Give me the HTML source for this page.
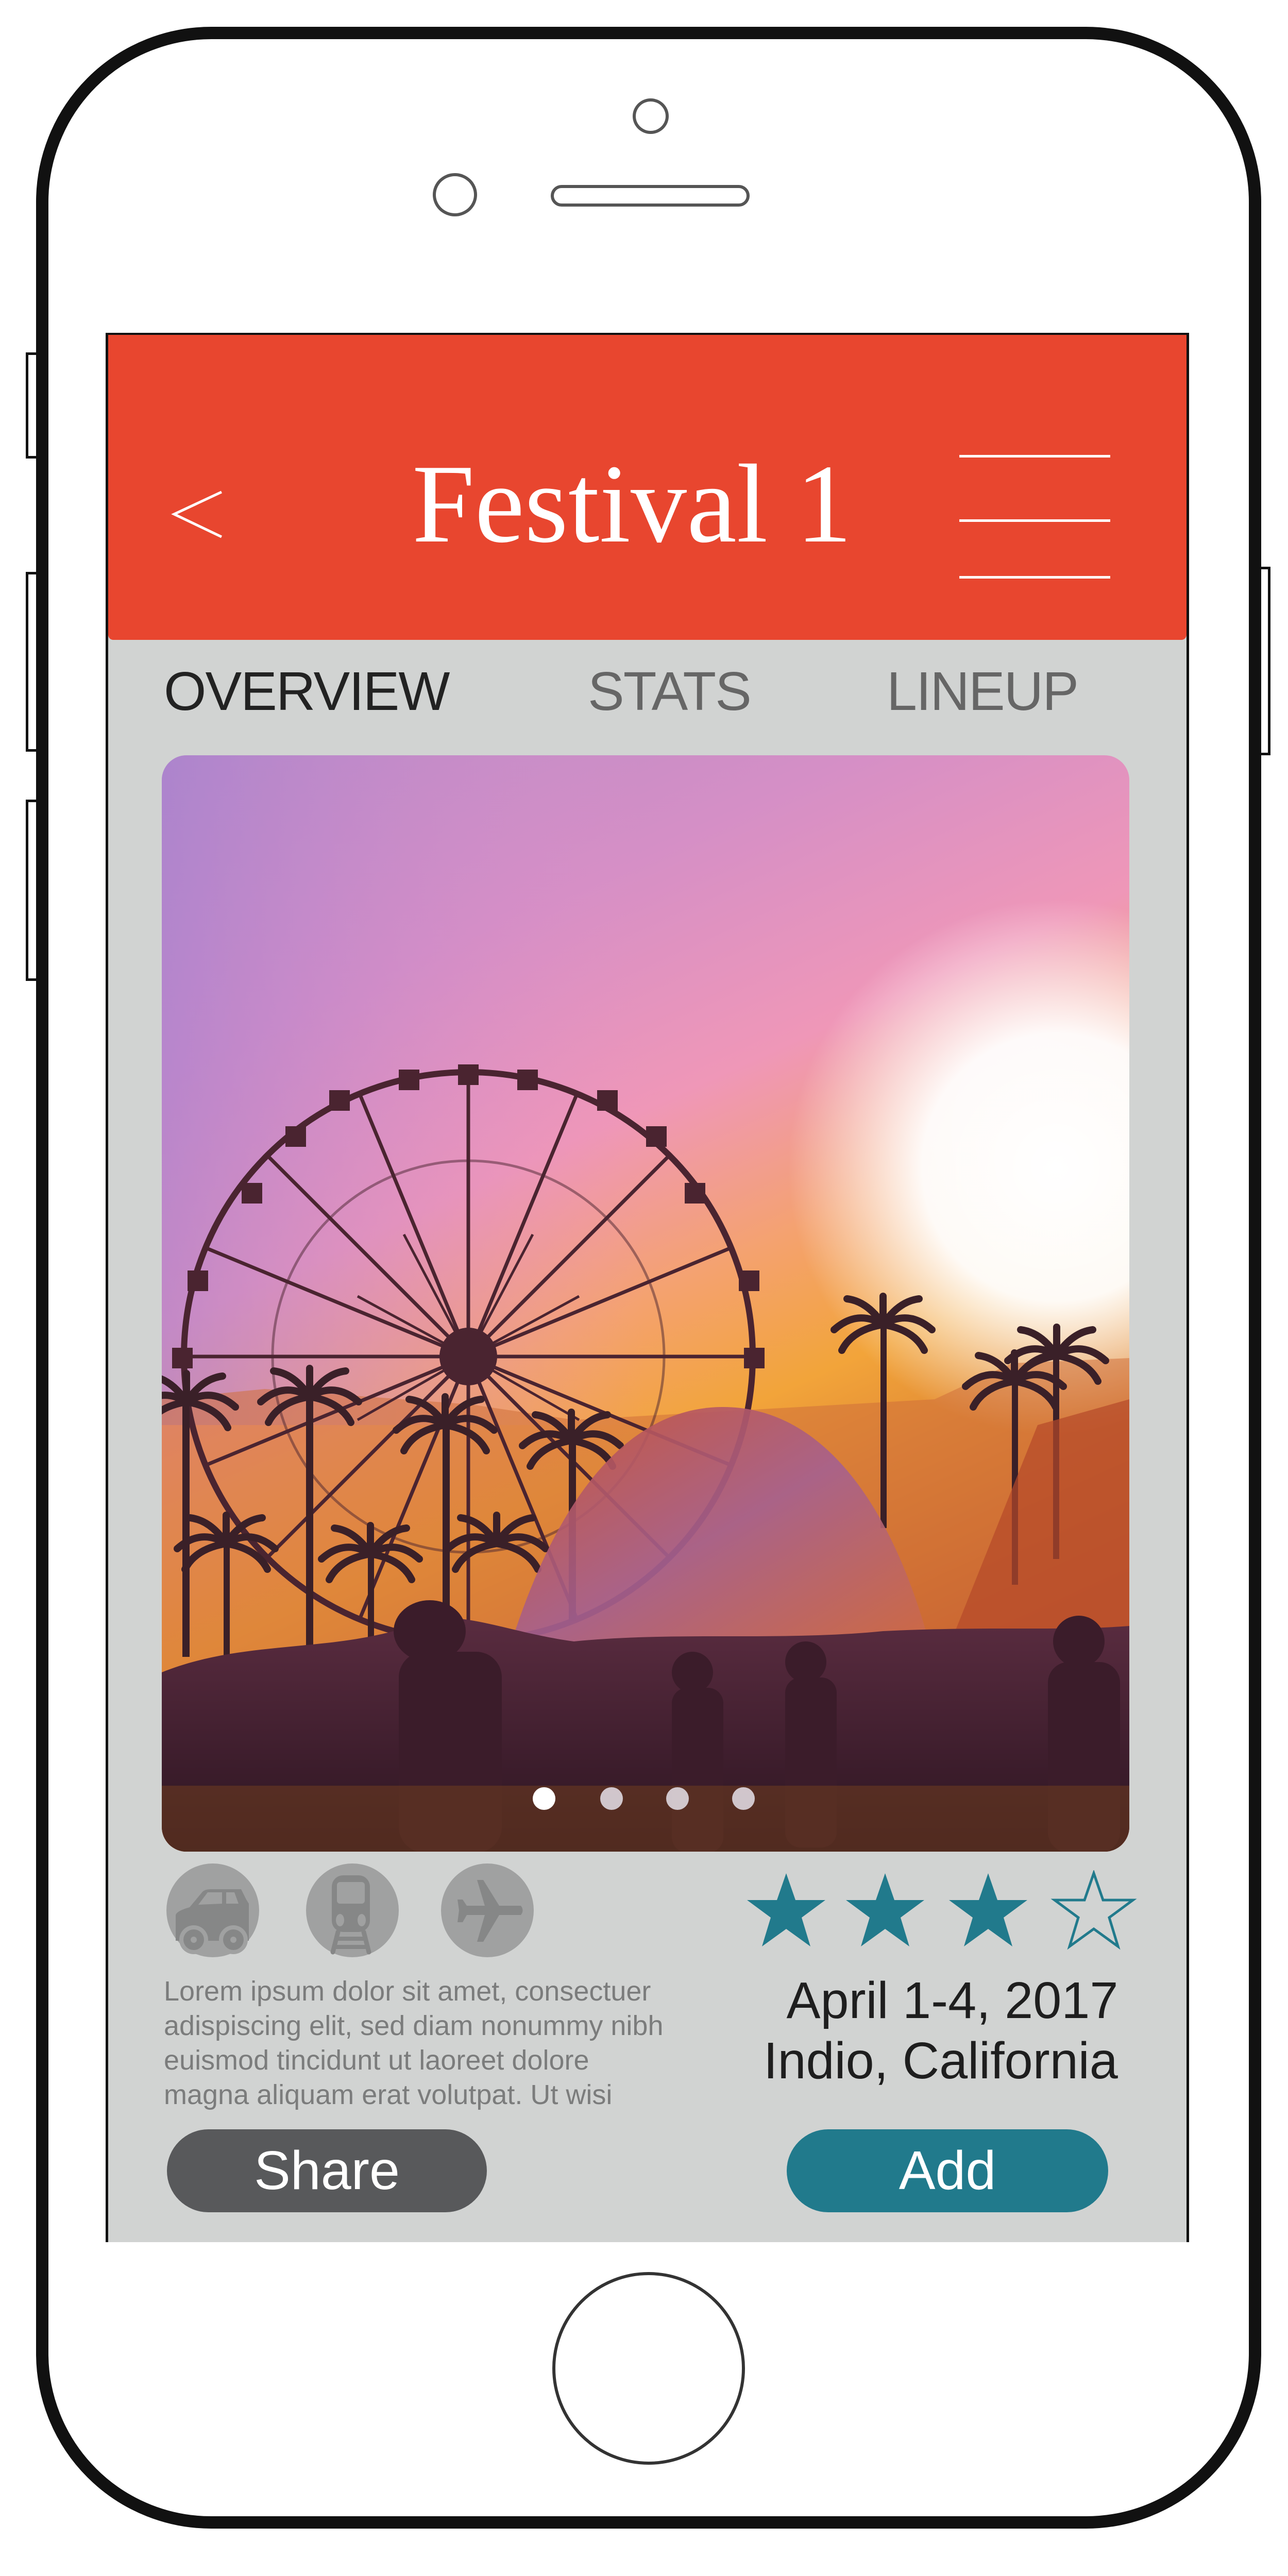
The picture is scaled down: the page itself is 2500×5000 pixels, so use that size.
<!DOCTYPE html>
<html><head><meta charset="utf-8"><style>
*{margin:0;padding:0;box-sizing:border-box}
body{width:2500px;height:5000px;background:#fff;position:relative;overflow:hidden;font-family:"Liberation Sans",sans-serif}
.abs{position:absolute}
.phone{left:70px;top:52px;width:2378px;height:4856px;border:24px solid #111;border-radius:340px}
.btn{background:#fff;border:5px solid #111}
.screen{left:205px;top:646px;width:2103px;height:3706px;background:#d1d3d2;border-left:5px solid #111;border-right:5px solid #111;border-top:4px solid #111}
.header{left:210px;top:650px;width:2093px;height:592px;background:#e8462f;border-radius:0 0 10px 10px}
.tab{font-size:106px;top:1282px;letter-spacing:-2px;white-space:nowrap}
.img{left:314px;top:1466px;width:1878px;height:2128px;border-radius:48px;overflow:hidden}
.dot{width:44px;height:44px;border-radius:50%;top:3469px}
.ic{width:180px;height:182px;top:3617px}
.lorem{left:318px;top:3832px;font-size:54px;line-height:67px;color:#7b7c7c;white-space:nowrap}
.info{right:330px;font-size:100px;color:#1e1e1e;transform:scaleX(0.99);transform-origin:right top;white-space:nowrap}
.pill{top:4133px;height:161px;border-radius:81px;color:#fff;font-size:106px;line-height:161px;text-align:center}
</style></head><body>
<div class="abs btn" style="left:50px;top:684px;width:28px;height:206px"></div>
<div class="abs btn" style="left:50px;top:1110px;width:28px;height:349px"></div>
<div class="abs btn" style="left:50px;top:1552px;width:28px;height:352px"></div>
<div class="abs btn" style="left:2440px;top:1100px;width:26px;height:366px"></div>
<div class="abs phone"></div>
<div class="abs" style="left:1228px;top:191px;width:70px;height:69px;border:6px solid #555;border-radius:50%"></div>
<div class="abs" style="left:840px;top:336px;width:86px;height:84px;border:6px solid #555;border-radius:50%"></div>
<div class="abs" style="left:1069px;top:359px;width:386px;height:42px;border:6px solid #555;border-radius:21px"></div>
<div class="abs" style="left:1072px;top:4410px;width:374px;height:374px;border:6px solid #333;border-radius:50%"></div>

<div class="abs screen"></div>
<div class="abs header"></div>
<svg class="abs" style="left:330px;top:950px" width="110" height="100"><polyline points="100,5 8,48 100,92" fill="none" stroke="#fff" stroke-width="5"/></svg>
<div class="abs" style="left:800px;top:870px;font-family:'Liberation Serif',serif;font-size:218px;color:#fff;white-space:nowrap;line-height:1">Festival 1</div>
<div class="abs" style="left:1862px;top:883px;width:293px;height:5px;background:#fff"></div>
<div class="abs" style="left:1862px;top:1008px;width:293px;height:5px;background:#fff"></div>
<div class="abs" style="left:1862px;top:1118px;width:293px;height:5px;background:#fff"></div>

<div class="abs tab" style="left:318px;color:#222">OVERVIEW</div>
<div class="abs tab" style="left:1141px;color:#666">STATS</div>
<div class="abs tab" style="left:1721px;color:#666">LINEUP</div>

<div class="abs img">
<svg width="1878" height="2128" viewBox="0 0 1878 2128">
<defs>
<linearGradient id="sky" x1="0" y1="0" x2="0.4" y2="1">
<stop offset="0" stop-color="#b88cc8"/><stop offset="0.25" stop-color="#d58fc6"/><stop offset="0.45" stop-color="#ef97b8"/><stop offset="0.6" stop-color="#f4a26f"/><stop offset="0.72" stop-color="#f2a43a"/><stop offset="1" stop-color="#c25a2a"/>
</linearGradient>
<linearGradient id="skyl" x1="0" y1="0" x2="1" y2="0">
<stop offset="0" stop-color="#a47fd0" stop-opacity="0.6"/><stop offset="0.5" stop-color="#e890c8" stop-opacity="0"/></linearGradient>
<radialGradient id="sun" cx="1736" cy="800" r="520" gradientUnits="userSpaceOnUse">
<stop offset="0" stop-color="#fff"/><stop offset="0.5" stop-color="#fff" stop-opacity="0.95"/><stop offset="1" stop-color="#fff" stop-opacity="0"/></radialGradient>
<linearGradient id="crowd" x1="0" y1="0" x2="0" y2="1">
<stop offset="0" stop-color="#5a2c40"/><stop offset="1" stop-color="#2b1420"/></linearGradient>
<linearGradient id="tent" x1="0" y1="0" x2="1" y2="1">
<stop offset="0" stop-color="#c4503a"/><stop offset="0.5" stop-color="#a56090"/><stop offset="1" stop-color="#d06a40"/></linearGradient>
<g id="palm" stroke="#3a2028" stroke-width="14" fill="none" stroke-linecap="round">
<path d="M0 0 Q-50 -30 -95 10"/><path d="M0 0 Q50 -30 95 10"/><path d="M0 0 Q-30 -45 -70 -50"/><path d="M0 0 Q30 -45 70 -50"/><path d="M0 0 Q-60 10 -80 50"/><path d="M0 0 Q60 10 80 50"/><path d="M0 0 L0 -55"/>
</g>
</defs>
<rect width="1878" height="2128" fill="url(#sky)"/>
<rect width="1878" height="1300" fill="url(#skyl)"/>
<circle cx="1736" cy="800" r="520" fill="url(#sun)"/>
<path d="M0 1250 L200 1230 L600 1260 L800 1290 L1500 1250 L1650 1180 L1878 1170 L1878 2128 L0 2128Z" fill="#d0703a" opacity="0.55"/>
<g stroke="#4a2430" fill="none">
<circle cx="595" cy="1167" r="552" stroke-width="12"/>
<circle cx="595" cy="1167" r="380" stroke-width="5" opacity="0.5"/>
<g stroke-width="7">
<line x1="595" y1="615" x2="595" y2="1719"/><line x1="43" y1="1167" x2="1147" y2="1167"/>
<line x1="205" y1="777" x2="985" y2="1557"/><line x1="985" y1="777" x2="205" y2="1557"/>
<line x1="384" y1="657" x2="806" y2="1677"/><line x1="806" y1="657" x2="384" y2="1677"/>
<line x1="85" y1="956" x2="1105" y2="1378"/><line x1="1105" y1="956" x2="85" y2="1378"/>
</g>
<g stroke-width="5">
<line x1="595" y1="1167" x2="470" y2="930"/><line x1="595" y1="1167" x2="720" y2="930"/>
<line x1="595" y1="1167" x2="380" y2="1050"/><line x1="595" y1="1167" x2="810" y2="1050"/>
<line x1="595" y1="1167" x2="380" y2="1290"/><line x1="595" y1="1167" x2="810" y2="1290"/>
</g></g>
<g fill="#4a2430">
<circle cx="595" cy="1167" r="56"/>
<rect x="575" y="600" width="40" height="40"/><rect x="845" y="650" width="40" height="40"/><rect x="325" y="650" width="40" height="40"/>
<rect x="1015" y="830" width="40" height="40"/><rect x="155" y="830" width="40" height="40"/>
<rect x="1120" y="1000" width="40" height="40"/><rect x="50" y="1000" width="40" height="40"/>
<rect x="1130" y="1150" width="40" height="40"/><rect x="20" y="1150" width="40" height="40"/>
<rect x="460" y="610" width="40" height="40"/><rect x="690" y="610" width="40" height="40"/>
<rect x="240" y="720" width="40" height="40"/><rect x="940" y="720" width="40" height="40"/>
</g>
<g fill="#3a2028">
<rect x="40" y="1250" width="14" height="500"/><rect x="280" y="1240" width="14" height="500"/>
<rect x="545" y="1300" width="14" height="400"/><rect x="790" y="1330" width="14" height="350"/>
<rect x="1395" y="1100" width="12" height="400"/><rect x="1730" y="1160" width="12" height="400"/>
<rect x="1650" y="1210" width="12" height="400"/><rect x="120" y="1530" width="12" height="250"/><rect x="400" y="1550" width="12" height="250"/>
</g>
<use href="#palm" x="48" y="1255"/><use href="#palm" x="287" y="1245"/><use href="#palm" x="550" y="1300"/>
<use href="#palm" x="795" y="1330"/><use href="#palm" x="1400" y="1105"/><use href="#palm" x="1737" y="1165"/>
<use href="#palm" x="1655" y="1215"/><use href="#palm" x="125" y="1530"/><use href="#palm" x="405" y="1550"/><use href="#palm" x="650" y="1530"/>
<path d="M670 1750 C760 1450 900 1265 1090 1265 C1280 1265 1420 1450 1497 1750Z" fill="url(#tent)" opacity="0.9"/>
<path d="M1700 1300 L1878 1250 L1878 1800 L1500 1800Z" fill="#b5482a" opacity="0.7"/>
<path d="M0 1780 C150 1720 300 1740 450 1700 C550 1640 650 1700 800 1720 C1000 1700 1200 1720 1400 1700 C1600 1690 1750 1700 1878 1690 L1878 2128 L0 2128Z" fill="url(#crowd)"/>
<g fill="#3b1c2a">
<ellipse cx="520" cy="1700" rx="70" ry="60"/><rect x="460" y="1740" width="200" height="390" rx="50"/>
<ellipse cx="1030" cy="1780" rx="40" ry="40"/><rect x="990" y="1810" width="100" height="320" rx="30"/>
<ellipse cx="1780" cy="1720" rx="50" ry="50"/><rect x="1720" y="1760" width="140" height="370" rx="40"/>
<ellipse cx="1250" cy="1760" rx="40" ry="40"/><rect x="1210" y="1790" width="100" height="330" rx="30"/>
</g>
<rect x="0" y="2000" width="1878" height="128" fill="#6a3a20" opacity="0.6"/>
</svg>
</div>
<div class="abs dot" style="left:1034px;background:#fff"></div>
<div class="abs dot" style="left:1165px;background:#e6e2ea;opacity:.85"></div>
<div class="abs dot" style="left:1293px;background:#e6e2ea;opacity:.85"></div>
<div class="abs dot" style="left:1421px;background:#e6e2ea;opacity:.85"></div>

<svg class="abs ic" style="left:323px" viewBox="0 0 180 182"><ellipse cx="90" cy="91" rx="90" ry="91" fill="#a0a1a1"/>
<path d="M18 150 L18 100 Q20 92 45 85 L70 55 Q75 50 85 50 L145 50 L155 70 L160 78 L160 150Z" fill="#868787"/>
<path d="M62 80 L80 56 L108 56 L108 78Z M116 56 L132 56 L140 78 L116 78Z" fill="#a0a1a1"/>
<circle cx="53" cy="148" r="28" fill="#a0a1a1"/><circle cx="53" cy="148" r="20" fill="#868787"/><circle cx="53" cy="148" r="6" fill="#a0a1a1"/>
<circle cx="130" cy="148" r="28" fill="#a0a1a1"/><circle cx="130" cy="148" r="20" fill="#868787"/><circle cx="130" cy="148" r="6" fill="#a0a1a1"/>
</svg>
<svg class="abs ic" style="left:594px" viewBox="0 0 180 182"><ellipse cx="90" cy="91" rx="90" ry="91" fill="#a0a1a1"/>
<rect x="50" y="23" width="74" height="110" rx="22" fill="#868787"/>
<rect x="60" y="36" width="54" height="42" rx="6" fill="#a0a1a1"/>
<ellipse cx="66" cy="110" rx="8" ry="12" fill="#a0a1a1"/><ellipse cx="108" cy="110" rx="8" ry="12" fill="#a0a1a1"/>
<path d="M62 133 L52 172 M112 133 L122 172" stroke="#868787" stroke-width="9" stroke-linecap="round"/>
<rect x="58" y="142" width="58" height="8" fill="#868787"/><rect x="54" y="158" width="66" height="8" fill="#868787"/>
</svg>
<svg class="abs ic" style="left:856px" viewBox="0 0 180 182"><ellipse cx="90" cy="91" rx="90" ry="91" fill="#a0a1a1"/>
<path d="M70 32 L82 32 L113 82 L155 82 Q162 91 155 100 L113 100 L82 152 L70 152 L85 100 L50 100 L42 114 L32 114 L35 91 L32 70 L42 70 L50 82 L85 82Z" fill="#868787"/>
</svg>

<svg class="abs" style="left:1440px;top:3630px" width="780" height="160" viewBox="0 0 780 160">
<defs><path id="st" d="M0 -76 L18 -24 L76 -24 L30 10 L47 66 L0 32 L-47 66 L-30 10 L-76 -24 L-18 -24Z"/></defs>
<use href="#st" x="86" y="82" fill="#217a8c"/>
<use href="#st" x="278" y="82" fill="#217a8c"/>
<use href="#st" x="478" y="82" fill="#217a8c"/>
<use href="#st" x="683" y="82" fill="none" stroke="#217a8c" stroke-width="5"/>
</svg>

<div class="abs lorem">Lorem ipsum dolor sit amet, consectuer<br>adispiscing elit, sed diam nonummy nibh<br>euismod tincidunt ut laoreet dolore<br>magna aliquam erat volutpat. Ut wisi</div>
<div class="abs info" style="top:3826px">April 1-4, 2017</div>
<div class="abs info" style="top:3943px">Indio, California</div>

<div class="abs pill" style="left:324px;width:621px;background:#58595b">Share</div>
<div class="abs pill" style="left:1527px;width:624px;background:#217a8c">Add</div>
</body></html>
